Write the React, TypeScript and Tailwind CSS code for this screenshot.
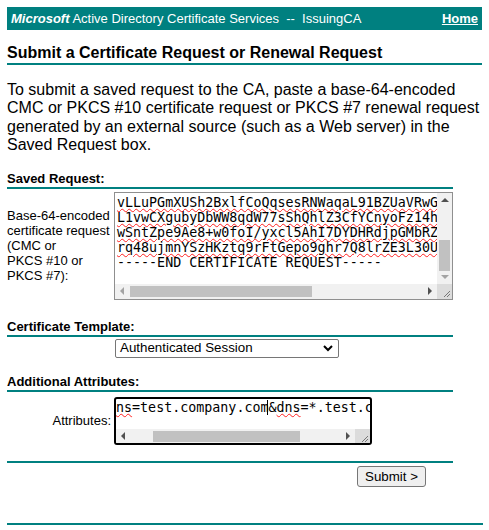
import React from "react";

function SectionHeader({ children, className = "" }: { children: React.ReactNode; className?: string }) {
  return (
    <div className={"w-[446px] border-b-2 border-[#008080] pb-[1px] text-[13px] leading-[15px] font-bold text-black " + className}>
      {children}
    </div>
  );
}

function Tri({ dir, color = "#505050" }: { dir: "up" | "down" | "left" | "right"; color?: string }) {
  const pts: Record<string, string> = {
    up: "0,4 4,0 8,4",
    down: "0,0 8,0 4,4",
    left: "4,0 4,8 0,4",
    right: "0,0 0,8 4,4",
  };
  const w = dir === "up" || dir === "down" ? 8 : 4;
  const h = dir === "up" || dir === "down" ? 4 : 8;
  return (
    <svg width={w} height={h} viewBox={`0 0 ${w} ${h}`} className="block shrink-0">
      <polygon points={pts[dir]} fill={color} />
    </svg>
  );
}

function Grip() {
  return (
    <svg width="15" height="15" viewBox="0 0 15 15" className="block">
      <line x1="13" y1="7" x2="7" y2="13" stroke="#777" strokeWidth="1" />
      <line x1="13" y1="10" x2="10" y2="13" stroke="#777" strokeWidth="1" />
    </svg>
  );
}

const mono = { fontFamily: '"DejaVu Sans Mono", monospace' };

function Spell({ children }: { children: React.ReactNode }) {
  return (
    <span className="underline decoration-wavy decoration-[#ff2020] decoration-[1px] underline-offset-[1px]">{children}</span>
  );
}

function HScroll({ leftColor, thumbLeft, thumbWidth }: { leftColor: string; thumbLeft: number; thumbWidth: number }) {
  return (
    <div className="h-[15px] bg-[#f1f1f1] flex items-center px-[5px]">
      <Tri dir="left" color={leftColor} />
      <div className="flex-1 flex h-[11px]">
        <div style={{ marginLeft: thumbLeft, width: thumbWidth }} className="h-full bg-[#c1c1c1]" />
      </div>
      <Tri dir="right" />
    </div>
  );
}

function RequestBox() {
  const lines = [
    "vLLuPGmXUSh2BxlfCoQqsesRNWaqaL91BZUaVRwG8kQ",
    "L1vwCXgubyDbWW8qdW77sShQhlZ3CfYCnyoFz14hAb",
    "wSntZpe9Ae8+w0foI/yxcl5AhI7DYDHRdjpGMbRZxq",
    "rq48ujmnYSzHKztq9rFtGepo9ghr7Q8lrZE3L30UpW",
  ];
  return (
    <div className="w-[339px] h-[108px] border border-[#8f8f8f] bg-white grid grid-cols-[1fr_15px] grid-rows-[1fr_15px] overflow-hidden">
      <div className="pl-[2px] pt-[2px] overflow-hidden text-[13.33px] leading-[15px] text-black whitespace-pre" style={mono}>
        {lines.map((l) => (
          <div key={l}>
            <Spell>{l}</Spell>
          </div>
        ))}
        <div>-----END CERTIFICATE REQUEST-----</div>
      </div>
      <div className="bg-[#f1f1f1] flex flex-col items-center py-[5px]">
        <Tri dir="up" />
        <div className="mt-[38px] w-[11px] h-[31px] bg-[#c1c1c1]" />
        <div className="flex-1" />
        <Tri dir="down" color="#a3a3a3" />
      </div>
      <HScroll leftColor="#a3a3a3" thumbLeft={6} thumbWidth={182} />
      <div className="bg-[#dcdcdc]">
        <Grip />
      </div>
    </div>
  );
}

function AttrBox() {
  return (
    <div className="w-[258px] h-[48px] border-2 border-black rounded-[3px] bg-white grid grid-cols-[1fr_15px] grid-rows-[1fr_14px] overflow-hidden">
      <div className="col-span-2 pt-[1px] overflow-hidden text-[13.33px] leading-[15px] text-black whitespace-pre" style={mono}>
        <Spell>ns</Spell>=test.company.com
        <span className="inline-block w-[1px] h-[15px] bg-black align-top -ml-[1px]" />
        &amp;<Spell>dns</Spell>=*.test.company.com
      </div>
      <HScroll leftColor="#505050" thumbLeft={28} thumbWidth={147} />
      <div className="bg-[#dcdcdc] overflow-hidden">
        <Grip />
      </div>
    </div>
  );
}

export default function App() {
  return (
    <div className="w-[489px] h-[530px] bg-white text-black p-[7px] overflow-hidden" style={{ fontFamily: '"Liberation Sans", Arial, sans-serif' }}>
      <div className="bg-[#008080] h-[23px] flex items-center justify-between px-[4px] text-white text-[13px]">
        <span className="whitespace-pre">
          <b><i>Microsoft</i></b> Active Directory Certificate Services  --  IssuingCA
        </span>
        <a className="font-bold underline text-white">Home</a>
      </div>

      <div className="mt-[13px] border-b-2 border-[#008080] text-[16px] leading-[20px] font-bold">
        Submit a Certificate Request or Renewal Request
      </div>

      <p className="mt-[16px] text-[16px] leading-[18.4px]">
        To submit a saved request to the CA, paste a base-64-encoded CMC or PKCS #10 certificate request or PKCS #7 renewal request generated by an external source (such as a Web server) in the Saved Request box.
      </p>

      <SectionHeader className="mt-[16px]">Saved Request:</SectionHeader>
      <div className="mt-[3px] flex items-center gap-[4px]">
        <div className="w-[103px] text-[13px] leading-[15px] whitespace-nowrap">
          <div>Base-64-encoded</div>
          <div>certificate request</div>
          <div>(CMC or</div>
          <div>PKCS #10 or</div>
          <div>PKCS #7):</div>
        </div>
        <RequestBox />
      </div>

      <SectionHeader className="mt-[19px]">Certificate Template:</SectionHeader>
      <div className="mt-[2px] ml-[108px] w-[224px] h-[19px] border border-[#767676] rounded-[2px] flex items-center justify-between pl-[4px] pr-[5px] text-[13.33px]">
        <span>Authenticated Session</span>
        <svg width="10" height="7" viewBox="0 0 10 7">
          <polyline points="1,1 5,5 9,1" fill="none" stroke="#000" strokeWidth="2" />
        </svg>
      </div>

      <SectionHeader className="mt-[16px]">Additional Attributes:</SectionHeader>
      <div className="mt-[5px] flex items-center gap-[3px]">
        <div className="w-[104px] text-right text-[13px] leading-[15px]">Attributes:</div>
        <AttrBox />
      </div>

      <div className="mt-[16px] w-[446px] h-[2px] bg-[#008080]" />
      <button className="mt-[3px] ml-[350px] w-[69px] h-[21px] border border-[#767676] rounded-[3px] bg-[#efefef] text-[13.33px] leading-[19px] text-black">
        Submit &gt;
      </button>
      <div className="mt-[35px] w-[476px] h-[2px] bg-[#008080]" />
    </div>
  );
}
